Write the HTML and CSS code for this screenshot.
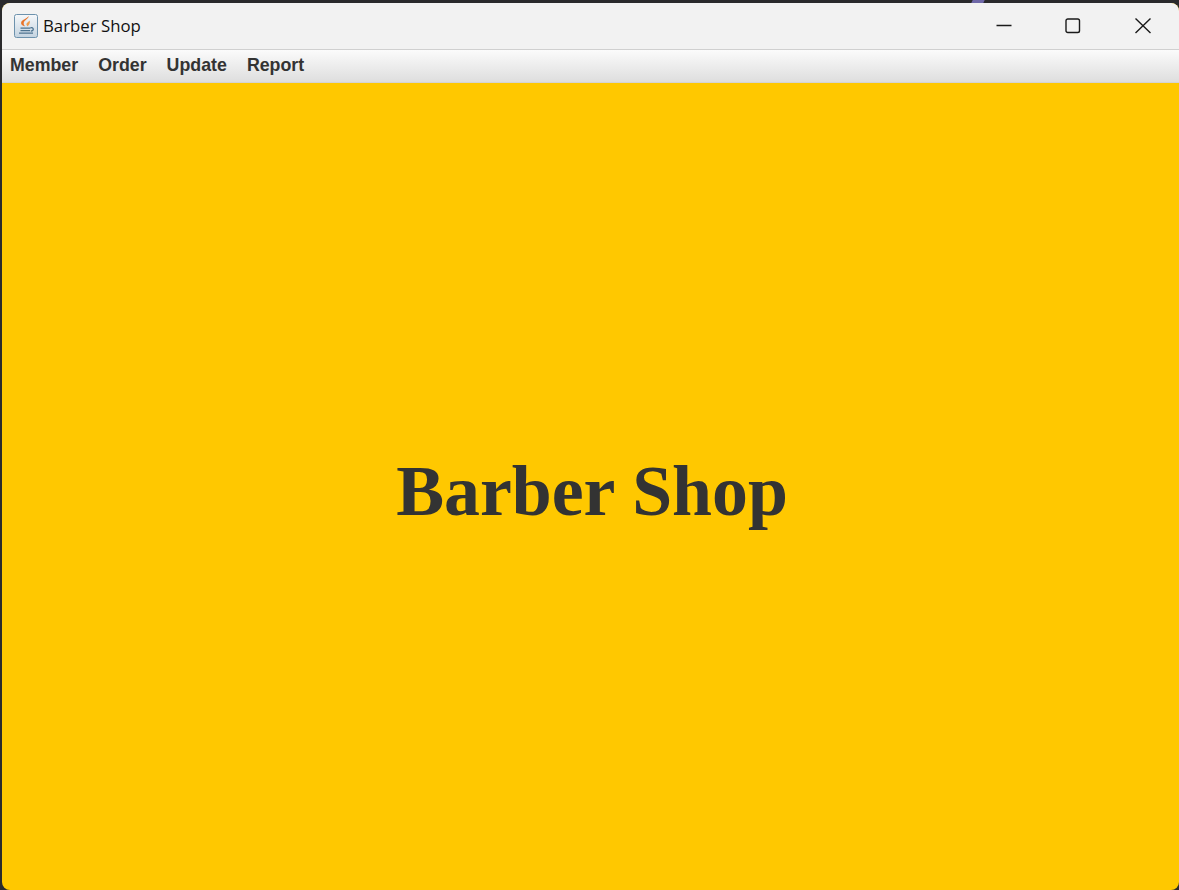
FILE: index.html
```html
<!DOCTYPE html>
<html lang="en">
<head>
<meta charset="utf-8">
<title>Barber Shop</title>
<link rel="stylesheet" href="styles.css">
</head>
<body>
<div class="desktop-accent"></div>
<main class="window">
  <header class="titlebar">
    <div class="app-title">
      <svg class="app-icon" viewBox="0 0 24 24" aria-hidden="true">
        <defs>
          <linearGradient id="tile" x1="0" y1="0" x2="0" y2="1">
            <stop offset="0" stop-color="#f6f8fa"/>
            <stop offset="1" stop-color="#c3d3e0"/>
          </linearGradient>
        </defs>
        <rect x="0.5" y="0.5" width="23" height="23" rx="2" fill="url(#tile)" stroke="#6d92ad"/>
        <path d="M14.500 2c.8 2.500-4.500 4-4.800 7-.1 1.300.6 2.300 1.300 3.200-2.700-.6-4.500-2-3.700-4.300C8.100 5.500 13 5 14.500 2z" fill="#e8742a"/>
        <path d="M15.500 6.500c-.8 1.500-3.500 2.200-3 4.200.2.700.6 1.100 1 1.500 1-.6 3.200-3 2-5.700z" fill="#f09a4a"/>
        <path d="M6.500 13.500h10v1.200h-10zM6.500 16h9.500v1.200H6.500zM5 18.500h14v1.200H5z" fill="#4d7390"/>
        <path d="M16.500 13.700c3.300-.6 4 2.800.3 3.500" fill="none" stroke="#4d7390" stroke-width="1.200"/>
      </svg>
      <span class="app-name">Barber Shop</span>
    </div>
    <div class="window-controls">
      <button class="control" aria-label="Minimize">
        <svg viewBox="0 0 16 16"><path d="M0.500 7.500H15.500"/></svg>
      </button>
      <button class="control" aria-label="Maximize">
        <svg viewBox="0 0 16 16"><rect x="1" y="1" width="13.500" height="13.500" rx="1.800"/></svg>
      </button>
      <button class="control control-close" aria-label="Close">
        <svg viewBox="0 0 16 16"><path d="M0.500 0.500L15.500 15M15.500 0.500L0.500 15"/></svg>
      </button>
    </div>
  </header>
  <nav class="menubar">
    <span class="menu-item">Member</span>
    <span class="menu-item">Order</span>
    <span class="menu-item">Update</span>
    <span class="menu-item">Report</span>
  </nav>
  <section class="content">
    <h1 class="headline">Barber Shop</h1>
  </section>
</main>
</body>
</html>
```

FILE: styles.css
```css
* {
  box-sizing: border-box;
}

html,
body {
  height: 100%;
}

body {
  margin: 0;
  padding: 3px 0 0 2px;
  background: #2a2a2c;
  overflow: hidden;
  position: relative;
}

.desktop-accent {
  position: absolute;
  top: 0;
  left: 972px;
  width: 12px;
  height: 3px;
  background: #6f68a8;
  transform: skewX(-25deg);
}

.window {
  height: 887px;
  display: flex;
  flex-direction: column;
  border-radius: 8px;
  overflow: hidden;
  background: #ffc800;
}

.titlebar {
  height: 46px;
  flex: none;
  display: flex;
  align-items: center;
  justify-content: space-between;
  background: #f2f2f2;
}

.app-title {
  display: flex;
  align-items: center;
  gap: 5px;
  padding-left: 12px;
}

.app-icon {
  width: 24px;
  height: 24px;
  display: block;
}

.app-name {
  font-family: "Open Sans", "Noto Sans", sans-serif;
  font-size: 16.800px;
  color: #111;
  line-height: 20px;
}

.window-controls {
  display: flex;
  align-items: center;
  gap: 53px;
  padding-right: 28px;
}

.control {
  width: 16px;
  height: 16px;
  padding: 0;
  border: 0;
  background: none;
  display: block;
}

.control-close {
  margin-left: 1px;
}

.control svg {
  width: 16px;
  height: 16px;
  display: block;
  fill: none;
  stroke: #1a1a1a;
  stroke-width: 1.400;
}

.menubar {
  height: 34px;
  flex: none;
  display: flex;
  align-items: center;
  gap: 20px;
  padding: 0 0 2px 8px;
  background: linear-gradient(#fbfbfb, #dedede);
  border-top: 1px solid #d0d0d0;
  border-bottom: 1px solid #d4d4d4;
}

.menu-item {
  font-family: "Liberation Sans", Arial, sans-serif;
  font-weight: 700;
  font-size: 17.800px;
  line-height: 22px;
  color: #333;
}

.content {
  flex: 1;
  display: flex;
  align-items: center;
  justify-content: center;
  padding-left: 3px;
  padding-top: 8px;
}

.headline {
  margin: 0;
  font-family: "Liberation Serif", "Times New Roman", serif;
  font-weight: 700;
  font-size: 71.800px;
  line-height: 82px;
  color: #333;
}
```
